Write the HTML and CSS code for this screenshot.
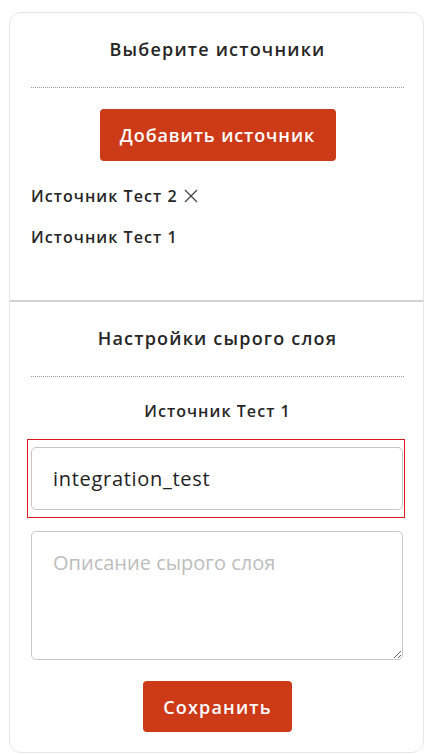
FILE: index.html
```html
<!DOCTYPE html>
<html lang="ru">
<head>
    <meta charset="UTF-8">
    <meta name="viewport" content="width=device-width, initial-scale=1.0">
    <title>Источники</title>
    <link rel="stylesheet" href="styles.css">
</head>
<body>
    <div class="card">
        <div class="section sources">
            <h2 class="section-title">Выберите источники</h2>
            <div class="divider"></div>
            <div class="center">
                <button class="btn btn-add">Добавить источник</button>
            </div>
            <div class="source-item">
                Источник Тест 2
                <svg class="remove" width="14" height="14" viewBox="0 0 14 14">
                    <path d="M1 1 L13 13 M13 1 L1 13" stroke="#444" stroke-width="1.3" fill="none"/>
                </svg>
            </div>
            <div class="source-item">Источник Тест 1</div>
        </div>
        <div class="section settings">
            <h2 class="section-title">Настройки сырого слоя</h2>
            <div class="divider"></div>
            <div class="source-name">Источник Тест 1</div>
            <div class="focus-box">
                <input class="field" type="text" value="integration_test">
            </div>
            <textarea class="field area" placeholder="Описание сырого слоя"></textarea>
            <div class="center">
                <button class="btn btn-save">Сохранить</button>
            </div>
        </div>
    </div>
</body>
</html>
```

FILE: styles.css
```css
body {
    margin: 0;
    padding: 12px 10px 3px 9px;
    background-color: #ffffff;
    font-family: "Open Sans", "Noto Sans", sans-serif;
    color: #262626;
}
.card {
    border: 1px solid #e6e6e6;
    border-radius: 12px;
    overflow: hidden;
}
.section {
    padding: 26px 19px 0 21px;
}
.sources {
    padding-bottom: 53px;
    border-bottom: 2px solid #d4d4d4;
}
.settings {
    padding-top: 26px;
    padding-bottom: 20px;
}
.section-title {
    margin: 0;
    font-size: 18px;
    line-height: 20px;
    font-weight: 600;
    letter-spacing: 1.2px;
    text-align: center;
}
.divider {
    margin-top: 28px;
    border-top: 1px dotted #9a9a9a;
}
.center {
    display: flex;
    justify-content: center;
}
.btn {
    border: none;
    border-radius: 4px;
    background-color: #cc3a17;
    color: #ffffff;
    font-family: "Open Sans", "Noto Sans", sans-serif;
    font-weight: 600;
    font-size: 18px;
    letter-spacing: 0.9px;
    cursor: pointer;
}
.btn-add {
    margin-top: 21px;
    width: 236px;
    height: 52px;
}
.btn-save {
    margin-top: 21px;
    width: 149px;
    height: 51px;
    letter-spacing: 1.2px;
}
.source-item {
    display: flex;
    align-items: center;
    gap: 6px;
    margin-top: 25px;
    font-size: 16px;
    line-height: 20px;
    font-weight: 600;
    letter-spacing: 1.05px;
}
.source-item + .source-item {
    margin-top: 21px;
}
.remove {
    display: block;
}
.source-name {
    margin-top: 24px;
    font-size: 16px;
    line-height: 20px;
    font-weight: 600;
    letter-spacing: 1.05px;
    text-align: center;
}
.focus-box {
    margin: 18px 0 0 -4px;
    width: 371px;
    padding: 7px 2px 7px 3px;
    border: 1px solid #d9191c;
}
.field {
    display: block;
    box-sizing: border-box;
    width: 372px;
    margin: 0;
    padding: 0 21px;
    border: 1.5px solid #c6c6c6;
    border-radius: 5px;
    font-family: "Open Sans", "Noto Sans", sans-serif;
    font-size: 20px;
    color: #222222;
    outline: none;
}
input.field {
    height: 63px;
    letter-spacing: 0.7px;
}
.area {
    margin-top: 13px;
    height: 129px;
    padding-top: 18px;
    line-height: 26px;
    resize: vertical;
}
.area::placeholder {
    color: #bdbdbd;
}
```
